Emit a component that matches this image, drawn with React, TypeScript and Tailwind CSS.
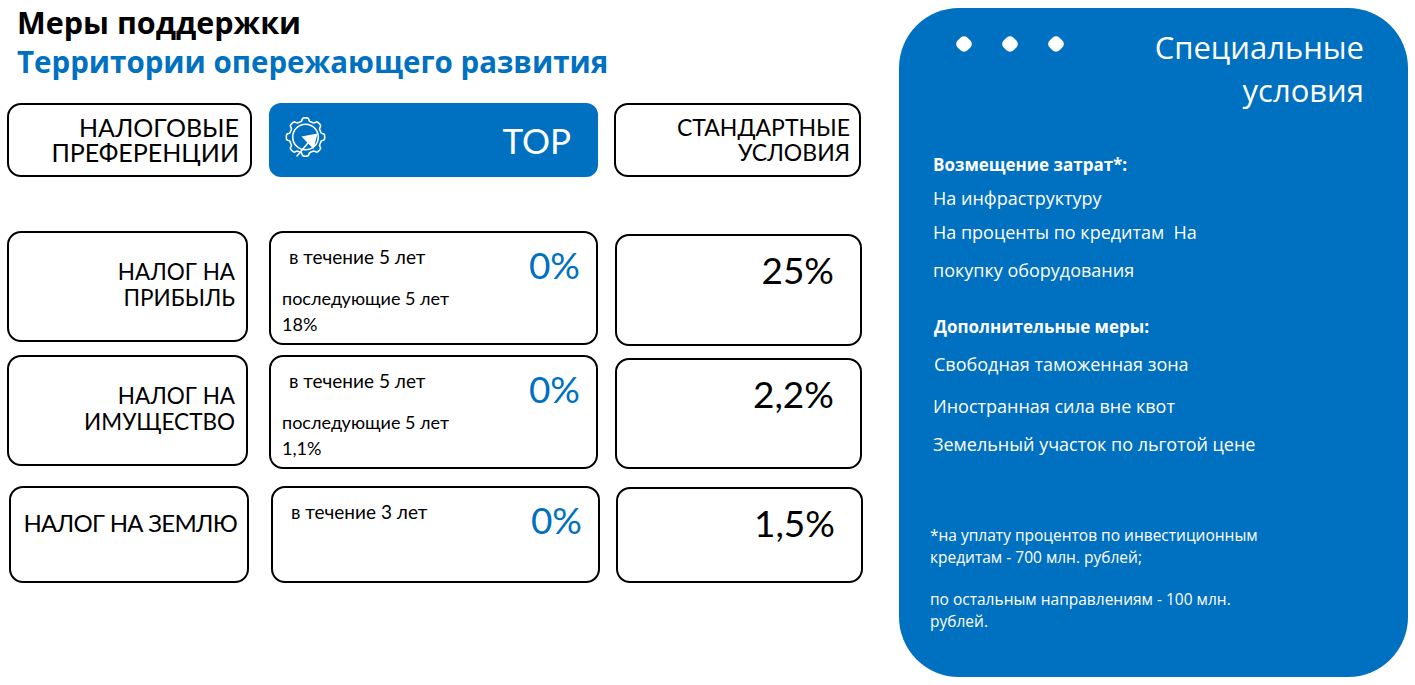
import React from "react";

const cardFont = { fontFamily: "Lato, 'Liberation Sans', sans-serif" };
const panelFont = { fontFamily: "'Open Sans', 'Noto Sans', sans-serif" };

// gear outline for the TOP badge, soft square teeth
const gearPath = (() => {
  const cx = 23.5;
  const cy = 25;
  const teeth = 8;
  const rIn = 16;
  const rOut = 19.2;
  const steps = 240;
  const pts: string[] = [];
  for (let i = 0; i <= steps; i++) {
    const a = (i / steps) * Math.PI * 2;
    const w = Math.cos(a * teeth);
    const k = 1 / (1 + Math.exp(-5 * w));
    const r = rIn + (rOut - rIn) * k;
    pts.push(`${(cx + r * Math.cos(a)).toFixed(2)},${(cy + r * Math.sin(a)).toFixed(2)}`);
  }
  return "M" + pts.join(" L") + " Z";
})();

function GearIcon() {
  return (
    <svg width="56" height="56" viewBox="0 0 56 56" fill="none">
      <path d={gearPath} stroke="white" strokeWidth="1.6" strokeLinejoin="round" />
      <circle cx="23.5" cy="25" r="12.8" stroke="white" strokeWidth="1.6" />
      <polygon points="19.5,24.5 35.5,21.5 31.5,37" fill="white" />
      <line x1="26" y1="31" x2="15" y2="44" stroke="white" strokeWidth="1.6" strokeLinecap="round" />
    </svg>
  );
}

function Card({
  className = "",
  children,
}: {
  className?: string;
  children?: React.ReactNode;
}) {
  return (
    <div className={`border-2 border-black rounded-[14px] bg-white ${className}`}>
      {children}
    </div>
  );
}

function RateCard({
  period,
  next,
  nextValue,
  className = "",
}: {
  period: string;
  next?: string;
  nextValue?: string;
  className?: string;
}) {
  return (
    <Card className={`w-[329px] ${className}`}>
      <div className="flex justify-between">
        <div className="pl-[18px] pt-[13px] text-[19px] leading-[22px] text-black">{period}</div>
        <div className="pr-[16px] pt-[12px] text-[37px] leading-[40px] text-[#0070c0]">0%</div>
      </div>
      {next && (
        <div className="pl-[11px] text-[18px] leading-[26px] text-black">
          <div>{next}</div>
          <div>{nextValue}</div>
        </div>
      )}
    </Card>
  );
}

function StandardCard({ value, className = "" }: { value: string; className?: string }) {
  return (
    <Card className={`w-[247px] flex justify-end ${className}`}>
      <div className="pr-[26px] pt-[12px] text-[37px] leading-[44px] text-black">{value}</div>
    </Card>
  );
}

export default function App() {
  return (
    <div className="w-[1415px] h-[685px] bg-white flex overflow-hidden" style={cardFont}>
      <div className="w-[899px] flex flex-col">
        <div className="pl-[17px] pt-[2px] font-bold text-[29.5px] leading-[40px]" style={panelFont}>
          <div className="text-black text-[30.5px]">Меры поддержки</div>
          <div className="text-[#0070c0]">Территории опережающего развития</div>
        </div>

        {/* header row */}
        <div className="flex mt-[21px] pl-[7px] h-[74px]">
          <Card className="w-[245px] flex flex-col items-end justify-center pr-[11px] text-[25px] leading-[25px] text-black">
            <div>НАЛОГОВЫЕ</div>
            <div>ПРЕФЕРЕНЦИИ</div>
          </Card>
          <div className="ml-[17px] w-[329px] rounded-[12px] bg-[#0070c0] flex items-center justify-between pl-[13px] pr-[27px]">
            <GearIcon />
            <div className="text-white text-[35px] leading-none">TOP</div>
          </div>
          <Card className="ml-[16px] w-[247px] flex flex-col items-end justify-center pr-[9px] text-[23px] leading-[25px] text-black">
            <div>СТАНДАРТНЫЕ</div>
            <div>УСЛОВИЯ</div>
          </Card>
        </div>

        {/* profit tax */}
        <div className="flex mt-[54px] pl-[7px] h-[114px] items-start">
          <Card className="w-[241px] h-[111px] flex flex-col items-end pt-[26px] pr-[11px] text-[22.5px] leading-[26px] text-black">
            <div>НАЛОГ НА</div>
            <div>ПРИБЫЛЬ</div>
          </Card>
          <RateCard className="ml-[21px] h-[114px]" period="в течение 5 лет" next="последующие 5 лет" nextValue="18%" />
          <StandardCard className="ml-[17px] mt-[3px] h-[112px]" value="25%" />
        </div>

        {/* property tax */}
        <div className="flex mt-[10px] pl-[7px] h-[114px] items-start">
          <Card className="w-[241px] h-[111px] flex flex-col items-end pt-[26px] pr-[11px] text-[22.5px] leading-[26px] text-black">
            <div>НАЛОГ НА</div>
            <div>ИМУЩЕСТВО</div>
          </Card>
          <RateCard className="ml-[21px] h-[114px]" period="в течение 5 лет" next="последующие 5 лет" nextValue="1,1%" />
          <StandardCard className="ml-[17px] mt-[3px] h-[111px]" value="2,2%" />
        </div>

        {/* land tax */}
        <div className="flex mt-[17px] pl-[9px] h-[98px] items-start">
          <Card className="w-[240px] h-[97px] flex justify-end pt-[22px] pr-[10px] text-[24px] leading-[26px] tracking-[-0.03em] text-black">
            <div>НАЛОГ НА ЗЕМЛЮ</div>
          </Card>
          <RateCard className="ml-[22px] h-[97px]" period="в течение 3 лет" />
          <StandardCard className="ml-[16px] mt-[1px] h-[96px]" value="1,5%" />
        </div>
      </div>

      {/* special conditions panel */}
      <div
        className="mt-[8px] w-[509px] h-[669px] rounded-[60px] bg-[#0070c0] text-white flex flex-col"
        style={panelFont}
      >
        <div className="flex justify-between pl-[58px] pr-[44px] pt-[18px]">
          <div className="flex gap-[32px] pt-[11px]">
            <span className="w-[14px] h-[14px] rounded-[5px] rotate-45 bg-white" />
            <span className="w-[14px] h-[14px] rounded-[5px] rotate-45 bg-white" />
            <span className="w-[14px] h-[14px] rounded-[5px] rotate-45 bg-white" />
          </div>
          <div className="text-right text-[31px] leading-[43px]">
            <div>Специальные</div>
            <div>условия</div>
          </div>
        </div>

        <div className="pl-[34px] pt-[43px] text-[18px]">
          <div className="font-bold text-[17px] leading-[20px]">Возмещение затрат*:</div>
          <div className="leading-[34px] mt-[6px]">На инфраструктуру</div>
          <div className="leading-[34px]">На проценты по кредитам&nbsp; На</div>
          <div className="leading-[34px] mt-[4px]">покупку оборудования</div>

          <div className="font-bold text-[17px] leading-[20px] mt-[30px] pl-[1px]">Дополнительные меры:</div>
          <div className="leading-[34px] mt-[10px] pl-[1px]">Свободная таможенная зона</div>
          <div className="leading-[34px] mt-[8px]">Иностранная сила вне квот</div>
          <div className="leading-[34px] mt-[4px]">Земельный участок по льготой цене</div>

          <div className="mt-[63px] -ml-[3px] text-[15.5px] leading-[22px]">
            <div>*на уплату процентов по инвестиционным</div>
            <div>кредитам - 700 млн. рублей;</div>
            <div className="mt-[20px]">по остальным направлениям - 100 млн.</div>
            <div>рублей.</div>
          </div>
        </div>
      </div>
    </div>
  );
}
